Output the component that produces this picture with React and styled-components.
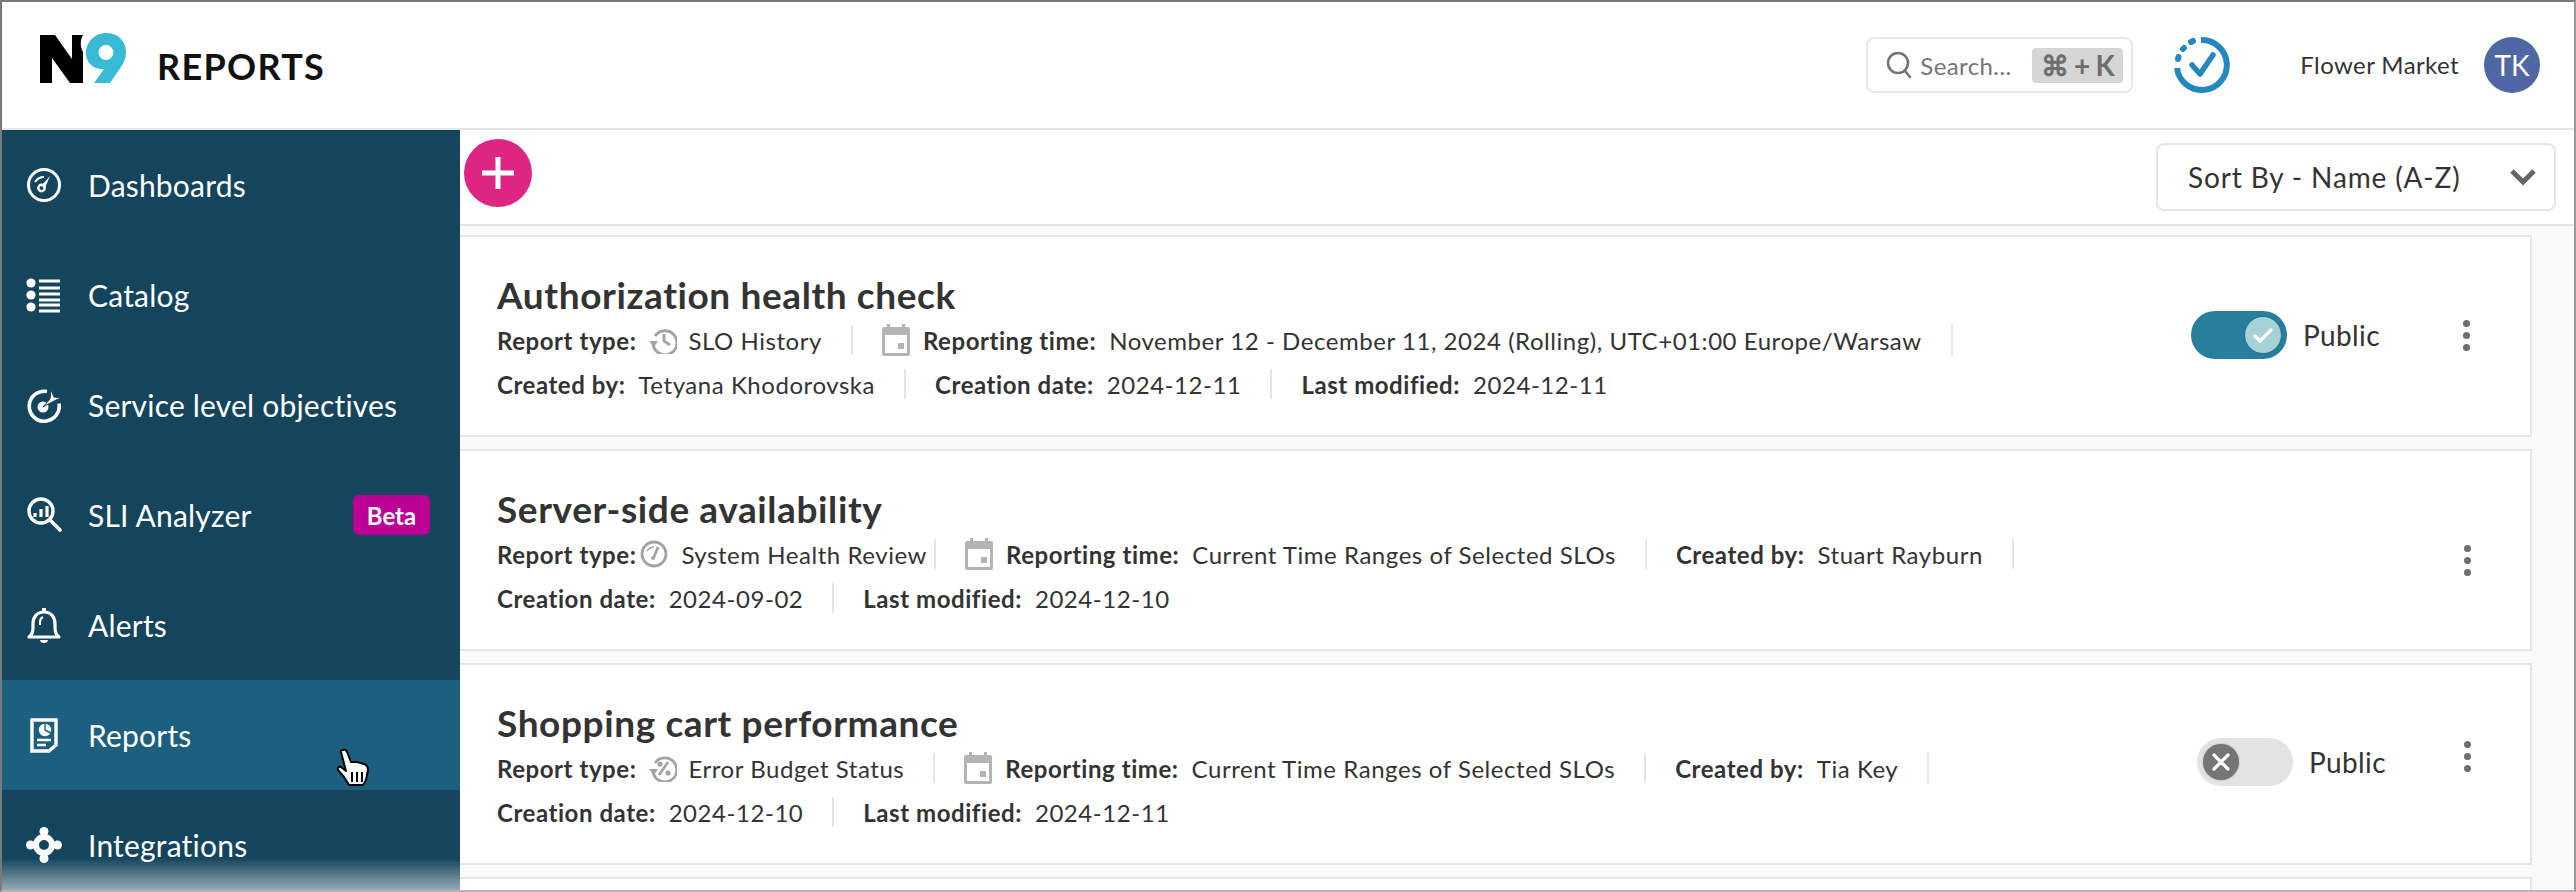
import React from 'react';
import styled, { createGlobalStyle } from 'styled-components';

const GlobalStyle = createGlobalStyle`
  html, body {
    margin: 0;
    padding: 0;
    background: #fff;
  }
  * {
    box-sizing: border-box;
  }
`;

const Frame = styled.div`
  width: 2576px;
  height: 892px;
  display: flex;
  flex-direction: column;
  overflow: hidden;
  border-top: 2px solid #7a7a7a;
  border-left: 2px solid #7a7a7a;
  border-right: 2px solid #9a9a9a;
  border-bottom: 2px solid #b4b4b4;
  font-family: 'Lato', 'Open Sans', sans-serif;
  color: #333;
`;

const Header = styled.header`
  flex: 0 0 128px;
  display: flex;
  align-items: center;
  padding: 0 34px 0 36px;
  background: #fff;
  border-bottom: 2px solid #e6e6e6;
`;

const LogoMark = styled.svg`
  flex: none;
  width: 90px;
  height: 52px;
  margin-bottom: 12px;
`;

const PageName = styled.h1`
  margin: 2px 0 0 29px;
  font-size: 36px;
  font-weight: 700;
  letter-spacing: 1.3px;
  color: #111;
`;

const SearchBox = styled.div`
  margin-left: auto;
  width: 267px;
  height: 56px;
  display: flex;
  align-items: center;
  padding: 0 8px 0 18px;
  border: 2px solid #e8e8e8;
  border-radius: 8px;
  color: #757575;
  font-size: 24px;
  letter-spacing: 0.4px;
`;

const SearchHint = styled.span`
  margin-left: 8px;
`;

const Shortcut = styled.kbd`
  margin-left: auto;
  width: 91px;
  height: 35px;
  display: flex;
  align-items: center;
  justify-content: center;
  gap: 5px;
  background: #d6d6d6;
  border-radius: 4px;
  font-family: inherit;
  font-size: 28px;
  font-weight: 700;
  color: #6e6e6e;
`;

const StatusIcon = styled.svg`
  width: 56px;
  height: 56px;
  margin-left: 41px;
`;

const Account = styled.span`
  margin: 0 0 2px 70px;
  font-size: 24px;
  letter-spacing: 0.4px;
  color: #333;
`;

const Avatar = styled.div`
  width: 56px;
  height: 56px;
  margin-left: 25px;
  display: flex;
  align-items: center;
  justify-content: center;
  border-radius: 50%;
  background: #4f67a5;
  color: #fff;
  font-size: 28px;
`;

const Body = styled.div`
  flex: 1;
  min-height: 0;
  display: flex;
`;

const Sidebar = styled.nav`
  position: relative;
  flex: 0 0 458px;
  overflow: hidden;
  background: #14455c;

  &::after {
    content: '';
    position: absolute;
    left: 0;
    right: 0;
    bottom: 0;
    height: 32px;
    background: linear-gradient(rgba(255, 255, 255, 0), rgba(255, 255, 255, 0.55));
  }
`;

const NavItem = styled.div`
  position: relative;
  height: 110px;
  display: flex;
  align-items: center;
  padding: 0 30px 0 24px;
  background: ${(p) => (p.$active ? '#1c5f7f' : 'transparent')};
  color: #fff;
  font-size: 30px;
  letter-spacing: 0.2px;
`;

const NavIcon = styled.svg`
  flex: 0 0 36px;
  width: 36px;
  height: 36px;
  margin-right: 26px;
`;

const Beta = styled.span`
  margin-left: auto;
  width: 77px;
  height: 40px;
  display: flex;
  align-items: center;
  justify-content: center;
  border-radius: 6px;
  background: #bc0095;
  font-size: 24px;
  font-weight: 700;
  letter-spacing: 0;
`;

const Pointer = styled.svg`
  position: absolute;
  left: 333px;
  top: 68px;
  width: 36px;
  height: 40px;
`;

const Main = styled.main`
  flex: 1;
  min-width: 0;
  display: flex;
  flex-direction: column;
  background: #fafafa;
`;

const Toolbar = styled.div`
  flex: 0 0 96px;
  display: flex;
  align-items: center;
  justify-content: space-between;
  padding: 0 18px 8px 4px;
  background: #fff;
  border-bottom: 2px solid #e6e6e6;
`;

const AddButton = styled.button`
  width: 68px;
  height: 68px;
  padding: 0;
  display: flex;
  align-items: center;
  justify-content: center;
  border: 0;
  border-radius: 50%;
  background: #dc2682;
`;

const SortSelect = styled.div`
  width: 400px;
  height: 68px;
  margin-top: 8px;
  display: flex;
  align-items: center;
  justify-content: space-between;
  padding: 0 18px 0 30px;
  border: 2px solid #e6e6e6;
  border-radius: 8px;
  background: #fff;
  font-size: 28px;
  letter-spacing: 0.85px;
`;

const List = styled.div`
  flex: 1;
  display: flex;
  flex-direction: column;
  gap: 12px;
  padding: 9px 42px 0 0;
`;

const Card = styled.article`
  flex: 0 0 202px;
  display: flex;
  justify-content: space-between;
  align-items: center;
  padding: 0 ${(p) => p.$pad}px 0 37px;
  background: #fff;
  border: 2px solid #e6e6e6;
  border-left: 0;
`;

const Info = styled.div`
  align-self: flex-start;
  padding-top: 36px;
`;

const Title = styled.h2`
  margin: 0;
  height: 45px;
  line-height: 44px;
  font-size: 37px;
  font-weight: 700;
  letter-spacing: 0.6px;
  color: #333;
`;

const MetaRow = styled.div`
  height: 44px;
  display: flex;
  align-items: center;
  font-size: 24px;
  letter-spacing: 0.55px;
`;

const Meta = styled.div`
  height: 30px;
  display: flex;
  align-items: center;
  margin-right: 29px;
  padding-right: ${(p) => (p.$tight ? 7 : 29)}px;
  border-right: 2px solid #e6e6e6;
  white-space: nowrap;
`;

const Label = styled.b`
  margin-right: ${(p) => (p.$tight ? 4 : 13)}px;
  font-weight: 700;
`;

const TypeIcon = styled.svg`
  width: 28px;
  height: 28px;
  margin-right: ${(p) => (p.$tight ? 13 : 11)}px;
`;

const CalendarIcon = styled.svg`
  width: 28px;
  height: 32px;
  margin-right: 13px;
`;

const Controls = styled.div`
  display: flex;
  align-items: center;
  margin-top: ${(p) => p.$offset}px;
`;

const Toggle = styled.div`
  width: 96px;
  height: 48px;
  display: flex;
  align-items: center;
  justify-content: ${(p) => (p.$on ? 'flex-end' : 'flex-start')};
  padding: 0 6px;
  border-radius: 24px;
  background: ${(p) => (p.$on ? '#277e9d' : '#e3e3e3')};
`;

const Knob = styled.div`
  width: 36px;
  height: 36px;
  display: flex;
  align-items: center;
  justify-content: center;
  border-radius: 50%;
  background: ${(p) => (p.$on ? '#a6d1d7' : '#757575')};
  box-shadow: 0 0 2px rgba(0, 0, 0, 0.3);
`;

const PublicLabel = styled.span`
  margin: 0 ${(p) => p.$after}px 0 16px;
  font-size: 28px;
  letter-spacing: 0.4px;
`;

const Dots = styled.div`
  display: flex;
  flex-direction: column;
  gap: 5px;
  margin-top: ${(p) => p.$shift || 0}px;

  span {
    width: 7px;
    height: 7px;
    border-radius: 50%;
    background: #6e6e6e;
  }
`;

const KebabDots = ({ shift }) => (
  <Dots $shift={shift}>
    <span />
    <span />
    <span />
  </Dots>
);

const Logo = () => (
  <LogoMark viewBox="0 0 90 52">
    <path fill="#000" d="M2 2h15l17 24V2h11c-3 5-3 12 0 17v31H32L14 25v25H2z" />
    <path
      fill="#38b9d6"
      fillRule="evenodd"
      d="M68 0c12 0 20 8 20 19 0 6-2 10-5 15L72 50H56l10-14c-10 1-18-6-18-16C48 9 57 0 68 0zm0 12a7.5 7.5 0 1 0 0 15 7.5 7.5 0 0 0 0-15z"
    />
  </LogoMark>
);

const white = { fill: 'none', stroke: '#fff', strokeWidth: 3 };

const icons = {
  dashboards: (
    <>
      <circle cx="18" cy="18" r="15.5" {...white} />
      <path fill="#fff" d="M24 9l-5 12-4-2z" />
      <circle cx="15.5" cy="21" r="3.2" fill="none" stroke="#fff" strokeWidth="2.4" />
      <path d="M9 15c2-3 5-5 9-5" {...white} strokeWidth="2.2" />
    </>
  ),
  catalog: (
    <>
      <circle cx="5" cy="6" r="4.6" fill="#fff" />
      <circle cx="5" cy="18" r="4.6" fill="#fff" />
      <circle cx="5" cy="30" r="4.6" fill="#fff" />
      <path
        stroke="#fff"
        strokeWidth="2.8"
        d="M13 4h21M13 11h21M13 17h21M13 23h21M13 28h21M13 34h21"
      />
    </>
  ),
  slo: (
    <>
      <path d="M21 4.5a15 15 0 1 0 12 12" {...white} strokeWidth="3.6" />
      <circle cx="17" cy="20" r="5.5" fill="#fff" />
      <path fill="#fff" d="M17 20l7-8 1-9 3 7 7 1-7 3z" stroke="#14455c" strokeWidth="1" />
    </>
  ),
  analyzer: (
    <>
      <circle cx="15" cy="14" r="12" {...white} strokeWidth="3.4" />
      <path d="M25 24l9 9" {...white} strokeWidth="3.6" strokeLinecap="round" />
      <path stroke="#fff" strokeWidth="3.2" d="M9 20v-4M15 20v-8M21 20V9" />
    </>
  ),
  alerts: (
    <>
      <path
        d="M3 30c4-3 4-6 4-13 0-7 4-12 11-12s11 5 11 12c0 7 0 10 4 13z"
        {...white}
        strokeWidth="3.2"
        strokeLinejoin="round"
      />
      <path d="M14 18v-3c0-2 1-4 3-5" {...white} strokeWidth="2" />
      <path fill="#fff" d="M14 33h8c0 2-2 3-4 3s-4-1-4-3zM16 1h4v4h-4z" />
    </>
  ),
  reports: (
    <>
      <path d="M6 3h24v25l-7 6H6z" {...white} strokeWidth="3.4" />
      <circle cx="19" cy="13" r="6.2" fill="#fff" />
      <path d="M19 13V6M19 13l6 3" stroke="#1c5f7f" strokeWidth="1.4" />
      <path stroke="#fff" strokeWidth="2.4" d="M11 23h14M11 28h9" />
    </>
  ),
  integrations: (
    <>
      <circle cx="18" cy="18" r="8" {...white} strokeWidth="6" />
      <circle cx="18" cy="4.5" r="4.5" fill="#fff" />
      <circle cx="18" cy="31.5" r="4.5" fill="#fff" />
      <circle cx="4.5" cy="18" r="4.5" fill="#fff" />
      <circle cx="31.5" cy="18" r="4.5" fill="#fff" />
    </>
  ),
};

const navItems = [
  { key: 'dashboards', label: 'Dashboards' },
  { key: 'catalog', label: 'Catalog' },
  { key: 'slo', label: 'Service level objectives' },
  { key: 'analyzer', label: 'SLI Analyzer', beta: true },
  { key: 'alerts', label: 'Alerts' },
  { key: 'reports', label: 'Reports', active: true },
  { key: 'integrations', label: 'Integrations' },
];

const gray = { fill: 'none', stroke: '#a3a3a3', strokeWidth: 2.8 };

const typeIcons = {
  history: (
    <>
      <path d="M6 10a12 12 0 1 1-2 8" {...gray} />
      <path fill="#a3a3a3" d="M0 15h9l-4 6z" />
      <path d="M15 8v7l6 4" {...gray} />
    </>
  ),
  health: (
    <>
      <circle cx="14" cy="14" r="12" {...gray} />
      <path d="M18 7l-4 10" {...gray} />
      <circle cx="13" cy="18" r="2" fill="#a3a3a3" />
      <path d="M7 11c2-3 4-4 7-4" {...gray} strokeWidth="1.6" />
    </>
  ),
  budget: (
    <>
      <path d="M6 9a12 12 0 1 1-2 9" {...gray} />
      <path fill="#a3a3a3" d="M0 15h9l-4 6z" />
      <path d="M19 8l-9 13" {...gray} />
      <circle cx="11" cy="10" r="2.6" fill="#a3a3a3" />
      <circle cx="19" cy="19" r="2.6" fill="#a3a3a3" />
    </>
  ),
};

const Calendar = () => (
  <CalendarIcon viewBox="0 0 28 32">
    <path
      fill="#b4b4b4"
      d="M5 0h3v3h12V0h3v3h3a2 2 0 0 1 2 2v25a2 2 0 0 1-2 2H2a2 2 0 0 1-2-2V5a2 2 0 0 1 2-2h3zM3 11v18h22V11z"
    />
    <rect x="16" y="19" width="6" height="6" fill="#b4b4b4" />
  </CalendarIcon>
);

const Item = ({ label, tight, icon, calendar, children }) => (
  <Meta $tight={tight}>
    {calendar && <Calendar />}
    <Label $tight={tight}>{label}</Label>
    {icon && (
      <TypeIcon $tight={tight} viewBox="0 0 28 28">
        {typeIcons[icon]}
      </TypeIcon>
    )}
    {children}
  </Meta>
);

const Switch = ({ on, after }) => (
  <>
    <Toggle $on={on}>
      <Knob $on={on}>
        <svg width="24" height="24" viewBox="0 0 24 24" fill="none" stroke="#fff" strokeWidth="3.2" strokeLinecap="round">
          {on ? <path d="M4 13l5 5 11-11" /> : <path d="M5 5l14 14M19 5L5 19" />}
        </svg>
      </Knob>
    </Toggle>
    <PublicLabel $after={after}>Public</PublicLabel>
  </>
);

export default function App() {
  return (
    <>
      <GlobalStyle />
      <Frame>
        <Header>
          <Logo />
          <PageName>REPORTS</PageName>
          <SearchBox>
            <svg width="26" height="28" viewBox="0 0 26 28" fill="none" stroke="#757575" strokeWidth="2.6">
              <circle cx="12" cy="12" r="10" />
              <path d="M19 20l5 6" strokeLinecap="round" />
            </svg>
            <SearchHint>Search...</SearchHint>
            <Shortcut>
              <span>⌘</span>
              <span>+</span>
              <span>K</span>
            </Shortcut>
          </SearchBox>
          <StatusIcon viewBox="0 0 56 56" fill="none" stroke="#2488bf" strokeWidth="6">
            <path d="M27 3a25 25 0 1 1-24 28" />
            <path d="M4 22l.5-2M9 12l1-1M17 5l2-1" strokeLinecap="round" strokeWidth="6" />
            <path d="M18 28l8 9 13-19" strokeLinecap="round" strokeLinejoin="round" strokeWidth="5.5" />
          </StatusIcon>
          <Account>Flower Market</Account>
          <Avatar>TK</Avatar>
        </Header>
        <Body>
          <Sidebar>
            {navItems.map((item) => (
              <NavItem key={item.key} $active={item.active}>
                <NavIcon viewBox="0 0 36 36">{icons[item.key]}</NavIcon>
                {item.label}
                {item.beta && <Beta>Beta</Beta>}
                {item.active && (
                  <Pointer viewBox="0 0 36 40">
                    <path
                      fill="#fff"
                      stroke="#000"
                      strokeWidth="2"
                      strokeLinejoin="round"
                      d="M8 2c2-1 3 0 4 2l4 10 6 0 7 2c3 1 4 3 4 6l-2 10-3 5H14l-5-8-6-7c-1-2 1-4 3-3l5 4-5-19c-1-1 0-2 2-2z"
                    />
                    <path stroke="#000" strokeWidth="2" d="M17 24v10M22 24v10M27 24v10" />
                  </Pointer>
                )}
              </NavItem>
            ))}
          </Sidebar>
          <Main>
            <Toolbar>
              <AddButton aria-label="Add report">
                <svg width="34" height="34" viewBox="0 0 34 34" stroke="#fff" strokeWidth="5">
                  <path d="M17 1v32M1 17h32" />
                </svg>
              </AddButton>
              <SortSelect>
                Sort By - Name (A-Z)
                <svg width="26" height="18" viewBox="0 0 26 18" fill="none" stroke="#666" strokeWidth="5">
                  <path d="M2 3l11 11L24 3" />
                </svg>
              </SortSelect>
            </Toolbar>
            <List>
              <Card $pad={60}>
                <Info>
                  <Title>Authorization health check</Title>
                  <MetaRow>
                    <Item label="Report type:" icon="history">SLO History</Item>
                    <Item label="Reporting time:" calendar>
                      November 12 - December 11, 2024 (Rolling), UTC+01:00 Europe/Warsaw
                    </Item>
                  </MetaRow>
                  <MetaRow>
                    <Item label="Created by:">Tetyana Khodorovska</Item>
                    <Item label="Creation date:">2024-12-11</Item>
                    <Label>Last modified:</Label>2024-12-11
                  </MetaRow>
                </Info>
                <Controls $offset={-2}>
                  <Switch on after={83} />
                  <KebabDots />
                </Controls>
              </Card>
              <Card $pad={59}>
                <Info>
                  <Title>Server-side availability</Title>
                  <MetaRow>
                    <Item label="Report type:" icon="health" tight>System Health Review</Item>
                    <Item label="Reporting time:" calendar>Current Time Ranges of Selected SLOs</Item>
                    <Item label="Created by:">Stuart Rayburn</Item>
                  </MetaRow>
                  <MetaRow>
                    <Item label="Creation date:">2024-09-02</Item>
                    <Label>Last modified:</Label>2024-12-10
                  </MetaRow>
                </Info>
                <Controls $offset={20}>
                  <KebabDots />
                </Controls>
              </Card>
              <Card $pad={59}>
                <Info>
                  <Title>Shopping cart performance</Title>
                  <MetaRow>
                    <Item label="Report type:" icon="budget">Error Budget Status</Item>
                    <Item label="Reporting time:" calendar>Current Time Ranges of Selected SLOs</Item>
                    <Item label="Created by:">Tia Key</Item>
                  </MetaRow>
                  <MetaRow>
                    <Item label="Creation date:">2024-12-10</Item>
                    <Label>Last modified:</Label>2024-12-11
                  </MetaRow>
                </Info>
                <Controls $offset={-4}>
                  <Switch after={78} />
                  <KebabDots shift={-12} />
                </Controls>
              </Card>
              <Card $pad={59} />
            </List>
          </Main>
        </Body>
      </Frame>
    </>
  );
}
